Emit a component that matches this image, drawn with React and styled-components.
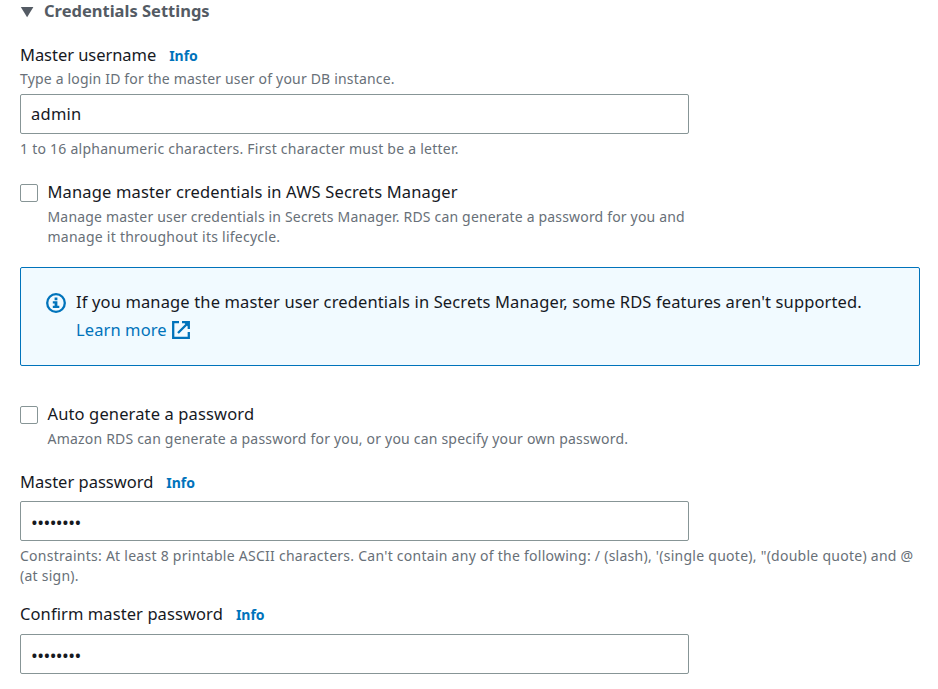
import React from "react";
import styled, { createGlobalStyle } from "styled-components";

const GlobalStyle = createGlobalStyle`
  * { box-sizing: border-box; }
  body {
    margin: 0;
    background: #fff;
    color: #16191f;
    font-family: "Noto Sans", "Open Sans", sans-serif;
    font-size: 16.5px;
    line-height: 22px;
    overflow: hidden;
  }
`;

const Panel = styled.main`
  display: flex;
  flex-direction: column;
  padding: 0 18px 0 20px;
`;

const Header = styled.header`
  display: flex;
  align-items: center;
  height: 22px;
  margin-bottom: 22px;
  color: #545b64;
`;

const Caret = styled.svg`
  flex: none;
  width: 14px;
  height: 12px;
  margin: 1px 10px 0 0;
`;

const Title = styled.h2`
  margin: 0;
  font-size: 16.5px;
  font-weight: 700;
`;

const Text = styled.span`
  white-space: nowrap;
  letter-spacing: ${(p) => p.$track || 0}px;
`;

const Field = styled.section`
  display: flex;
  flex-direction: column;
  margin-bottom: ${(p) => p.$after || 0}px;
`;

const LabelRow = styled.div`
  display: flex;
  align-items: baseline;
  gap: 13px;
  height: 22px;
  margin-bottom: ${(p) => p.$after}px;
`;

const InfoLink = styled.a`
  color: #0073bb;
  font-size: 14px;
  font-weight: 700;
`;

const Hint = styled.div`
  display: flex;
  flex-direction: column;
  color: #687078;
  font-size: 14px;
  line-height: 20px;
`;

const TextInput = styled.input`
  width: 669px;
  height: 40px;
  margin: ${(p) => p.$before || 0}px 0 ${(p) => p.$after || 0}px;
  padding: 0 10px 2px;
  border: 1px solid #879596;
  border-radius: 2px;
  outline: none;
  background: #fff;
  color: #16191f;
  font-family: inherit;
  font-size: 16.5px;
  letter-spacing: 0.25px;
`;

const PasswordInput = styled(TextInput)`
  padding: 2px 10px 0;
  font-size: 18px;
  letter-spacing: -0.55px;
`;

const CheckRow = styled.label`
  display: flex;
  gap: 9.5px;
  margin-bottom: ${(p) => p.$after}px;
`;

const Checkbox = styled.input`
  appearance: none;
  flex: none;
  width: 18px;
  height: 18px;
  margin: 3px 0 0;
  border: 1px solid #879596;
  border-radius: 2px;
  background: #fff;
`;

const CheckBody = styled.div`
  display: flex;
  flex-direction: column;
  gap: 4px;
`;

const Alert = styled.div`
  display: flex;
  gap: 10px;
  height: 99px;
  margin-bottom: 37px;
  padding: 20px 25px;
  border: 1px solid #0073bb;
  border-radius: 2px;
  background: #f1faff;
  line-height: 28px;
`;

const AlertIcon = styled.svg`
  flex: none;
  width: 20px;
  height: 20px;
  margin-top: 5px;
`;

const AlertBody = styled.div`
  display: flex;
  flex-direction: column;
`;

const LearnLink = styled.a`
  display: flex;
  align-items: center;
  gap: 5px;
  color: #0073bb;
`;

const ExternalIcon = styled.svg`
  width: 18px;
  height: 18px;
`;

function Label({ children, track, after }) {
  return (
    <LabelRow $after={after}>
      <Text $track={track}>{children}</Text>
      <InfoLink>Info</InfoLink>
    </LabelRow>
  );
}

export default function App() {
  return (
    <>
      <GlobalStyle />
      <Panel>
        <Header>
          <Caret viewBox="0 0 14 12">
            <path d="M0.8 1H13.4L7.1 11.2Z" fill="#545b64" />
          </Caret>
          <Title>Credentials Settings</Title>
        </Header>

        <Field $after={22}>
          <Label track={-0.05} after={3}>Master username</Label>
          <Hint>
            <Text $track={0.18}>Type a login ID for the master user of your DB instance.</Text>
          </Hint>
          <TextInput $before={5} $after={5} defaultValue="admin" />
          <Hint>
            <Text $track={0.245}>1 to 16 alphanumeric characters. First character must be a letter.</Text>
          </Hint>
        </Field>

        <CheckRow $after={20}>
          <Checkbox type="checkbox" />
          <CheckBody>
            <Text $track={0.145}>Manage master credentials in AWS Secrets Manager</Text>
            <Hint>
              <Text $track={0.175}>
                Manage master user credentials in Secrets Manager. RDS can generate a password for you and
              </Text>
              <Text $track={0.25}>manage it throughout its lifecycle.</Text>
            </Hint>
          </CheckBody>
        </CheckRow>

        <Alert>
          <AlertIcon viewBox="0 0 20 20">
            <circle cx="10" cy="10" r="8.8" fill="none" stroke="#0073bb" strokeWidth="2.3" />
            <path d="M8.6 4.6h2.8v2.6H8.6zM6.8 8.3h4.6v4.5h1.9v2.3H6.8v-2.3h1.8v-2.2H6.8z" fill="#0073bb" />
          </AlertIcon>
          <AlertBody>
            <Text $track={0.135}>
              If you manage the master user credentials in Secrets Manager, some RDS features aren't supported.
            </Text>
            <LearnLink>
              <Text $track={0.1}>Learn more</Text>
              <ExternalIcon viewBox="0 0 18 18" fill="none" stroke="#0073bb" strokeWidth="2.3">
                <path d="M7 1.2H1.2V16.8H16.8V11" />
                <path d="M10 1.2H16.8V8M16 2L6 12" />
                <path d="M12.5 2H16V5.5Z" fill="#0073bb" stroke="none" />
              </ExternalIcon>
            </LearnLink>
          </AlertBody>
        </Alert>

        <CheckRow $after={22}>
          <Checkbox type="checkbox" />
          <CheckBody>
            <Text $track={0.13}>Auto generate a password</Text>
            <Hint>
              <Text $track={0.2}>
                Amazon RDS can generate a password for you, or you can specify your own password.
              </Text>
            </Hint>
          </CheckBody>
        </CheckRow>

        <Field $after={17}>
          <Label after={8}>Master password</Label>
          <PasswordInput type="password" $after={5} defaultValue="password" />
          <Hint>
            <Text $track={0.262}>
              Constraints: At least 8 printable ASCII characters. Can't contain any of the following: / (slash), '(single quote), "(double quote) and @
            </Text>
            <Text $track={0.25}>(at sign).</Text>
          </Hint>
        </Field>

        <Field>
          <Label track={0.09} after={9}>Confirm master password</Label>
          <PasswordInput type="password" defaultValue="password" />
        </Field>
      </Panel>
    </>
  );
}
